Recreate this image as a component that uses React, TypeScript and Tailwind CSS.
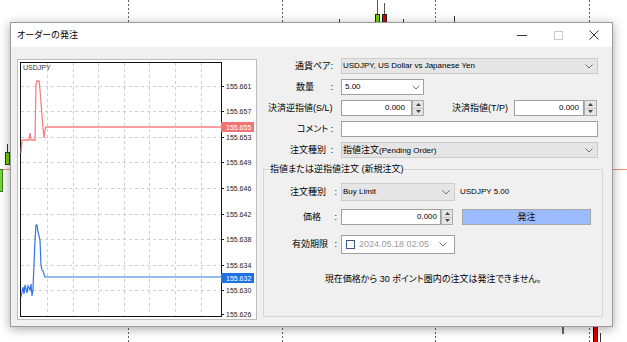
import React from "react";

const gridX = [29, 55, 80, 106, 131, 157, 183];
const levels = [
  { y: 26, p: "155.661" },
  { y: 51, p: "155.657" },
  { y: 77, p: "155.653" },
  { y: 102, p: "155.649" },
  { y: 128, p: "155.646" },
  { y: 154, p: "155.642" },
  { y: 179, p: "155.638" },
  { y: 205, p: "155.634" },
  { y: 230, p: "155.630" },
  { y: 254, p: "155.626" },
];

const bid =
  "3,93 4,80 11,80 12,73 13,80 17,80 18,25 19,21 21,21 22,30 25,68 26,78 27,70 28,67 203,67";
const ask =
  "3,237 5,227 6,234 7,225 9,233 10,226 12,230 13,224 14,236 15,229 17,180 18,165 19,165 20,172 22,180 23,205 24,210 25,211 27,217 203,217";

function Chevron({ className = "" }: { className?: string }) {
  return (
    <svg width="8" height="5" viewBox="0 0 8 5" className={className}>
      <path d="M0.5 0.5L4 4L7.5 0.5" fill="none" stroke="#707070" strokeWidth="1" />
    </svg>
  );
}

function Spin({ className }: { className: string }) {
  return (
    <div className={`flex h-full flex-col border border-[#adadad] bg-[#e5e5e5] ${className}`}>
      <div className="flex flex-1 items-center justify-center border-b border-[#c8c8c8]">
        <svg width="5" height="3" viewBox="0 0 5 3">
          <path d="M0 3L2.5 0L5 3Z" fill="#444" />
        </svg>
      </div>
      <div className="flex flex-1 items-center justify-center">
        <svg width="5" height="3" viewBox="0 0 5 3">
          <path d="M0 0L2.5 3L5 0Z" fill="#444" />
        </svg>
      </div>
    </div>
  );
}

function Label({
  text,
  pad,
  end,
  width = "w-[78px]",
}: {
  text: string;
  pad: string;
  end: string;
  width?: string;
}) {
  return (
    <div className={`flex shrink-0 items-center whitespace-nowrap ${width}`}>
      <span className={pad}>{text}</span>
      <span className={`ml-auto ${end}`}>:</span>
    </div>
  );
}

function Chart() {
  return (
    <svg width="238" height="259" viewBox="0 0 238 259" className="block">
      {gridX.map((x) => (
        <line key={x} x1={x + 0.5} y1="3" x2={x + 0.5} y2="256" stroke="#cfcfcf" strokeDasharray="3 3" />
      ))}
      {levels.slice(0, 9).map((l) => (
        <line key={l.p} x1="3" y1={l.y + 0.5} x2="203" y2={l.y + 0.5} stroke="#cfcfcf" strokeDasharray="3 3" />
      ))}
      <rect x="2.5" y="2.5" width="201" height="254" fill="none" stroke="#111" />
      {levels.map((l) => (
        <g key={l.p}>
          <line x1="203.5" y1={l.y + 0.5} x2="206" y2={l.y + 0.5} stroke="#111" />
          <text x="208" y={l.y + 3} fontSize="7" fill="#222" fontFamily="Liberation Sans">
            {l.p}
          </text>
        </g>
      ))}
      <text x="5" y="10" fontSize="7" fill="#333" fontFamily="Liberation Sans">
        USDJPY
      </text>
      <polyline points={bid} fill="none" stroke="#f48080" strokeWidth="1.3" />
      <rect x="203" y="62" width="33" height="10" fill="#f27474" />
      <text x="208" y="70" fontSize="7" fill="#fff" fontFamily="Liberation Sans">
        155.655
      </text>
      <polyline points={ask} fill="none" stroke="#2f74e6" strokeWidth="1.2" />
      <rect x="203" y="213" width="33" height="10" fill="#1f6fe5" />
      <text x="208" y="221" fontSize="7" fill="#fff" fontFamily="Liberation Sans">
        155.632
      </text>
    </svg>
  );
}

function Backdrop() {
  return (
    <svg width="627" height="342" className="absolute inset-0">
      {[128.5, 282.5, 435.5, 589.5].map((x) => (
        <line key={x} x1={x} y1="0" x2={x} y2="342" stroke="#666" strokeDasharray="2 2" />
      ))}
      <line x1="0" y1="169.5" x2="627" y2="169.5" stroke="#f0906c" />
      <line x1="7.5" y1="144" x2="7.5" y2="152" stroke="#333" />
      <rect x="5.5" y="152.5" width="4" height="12" fill="#6fd400" stroke="#333" />
      <rect x="-1" y="169.5" width="3.5" height="22" fill="#7ad63a" stroke="#3a7a20" />
      <line x1="377.5" y1="0" x2="377.5" y2="15" stroke="#555" />
      <rect x="375.5" y="14.5" width="4" height="8" fill="#6fd400" stroke="#222" />
      <line x1="384.5" y1="3" x2="384.5" y2="15" stroke="#555" />
      <rect x="382.5" y="14.5" width="4" height="8" fill="#e00000" stroke="#222" />
      <line x1="339.5" y1="19" x2="339.5" y2="22" stroke="#333" />
      <line x1="403.5" y1="19" x2="403.5" y2="22" stroke="#333" />
      <line x1="454.5" y1="16" x2="454.5" y2="22" stroke="#333" />
      <line x1="563" y1="326" x2="563" y2="334" stroke="#666" strokeWidth="2" />
      <rect x="593.5" y="326" width="4" height="17" fill="#e00000" stroke="#111" />
      <line x1="600.5" y1="333" x2="600.5" y2="342" stroke="#333" />
    </svg>
  );
}

export default function App() {
  return (
    <div className="relative h-[342px] w-[627px] overflow-hidden bg-white font-['Liberation_Sans','Noto_Sans_CJK_JP',sans-serif] text-black [font-feature-settings:'palt']">
      <Backdrop />
      <div className="absolute left-[10px] top-[22px] flex h-[305px] w-[603px] flex-col border border-[#9c9c9c] bg-[#f0f0f0] shadow-[0_2px_10px_rgba(0,0,0,0.35)]">
        {/* title bar */}
        <div className="flex h-[24px] shrink-0 items-center bg-white">
          <span className="pl-[6px] text-[9px] leading-none">オーダーの発注</span>
          <div className="ml-auto flex h-full">
            <div className="flex w-[36px] items-center justify-center">
              <div className="h-px w-[10px] bg-[#333]" />
            </div>
            <div className="flex w-[36px] items-center justify-center">
              <div className="h-[9px] w-[9px] border border-[#c9c9c9]" />
            </div>
            <div className="flex w-[36px] items-center justify-center">
              <svg width="10" height="10" viewBox="0 0 10 10">
                <path d="M0.5 0.5L9.5 9.5M9.5 0.5L0.5 9.5" stroke="#333" strokeWidth="1" />
              </svg>
            </div>
          </div>
        </div>

        <div className="flex flex-1 pl-[6px]">
          <div className="mt-[12px] h-[261px] w-[240px] shrink-0 border border-[#bdbdbd] bg-white">
            <Chart />
          </div>

          <div className="ml-[6px] mt-[11px] flex w-[340px] flex-col text-[9px] leading-none">
            <div className="flex flex-col gap-[5px] pr-[5px]">
              <div className="flex h-[16px] items-center">
                <Label text="通貨ペア" pad="pl-[32px]" end="mr-[8px]" />
                <div className="flex h-full flex-1 items-center justify-between border border-[#cccccc] bg-[#e5e5e5] pl-[1px] pr-[4px] text-[8px]">
                  <span>USDJPY, US Dollar vs Japanese Yen</span>
                  <Chevron />
                </div>
              </div>

              <div className="flex h-[16px] items-center">
                <Label text="数量" pad="pl-[33px]" end="mr-[8px]" />
                <div className="flex h-full w-[83px] items-center justify-between border border-[#a0a0a0] bg-white pl-[3px] pr-[3px] text-[8px]">
                  <span>5.00</span>
                  <Chevron />
                </div>
              </div>

              <div className="flex h-[16px] items-center">
                <div className="flex w-[78px] shrink-0 items-center whitespace-nowrap pl-[5px]">決済逆指値(S/L)</div>
                <div className="flex h-full w-[71px] items-center justify-end border border-[#a0a0a0] bg-white pr-[6px] text-[8px]">
                  0.000
                </div>
                <Spin className="w-[12px]" />
                <div className="flex-1 whitespace-nowrap pr-[6px] text-right">決済指値(T/P)</div>
                <div className="flex h-full w-[70px] items-center justify-end border border-[#a0a0a0] bg-white pr-[4px] text-[8px]">
                  0.000
                </div>
                <Spin className="mr-[1px] w-[13px]" />
              </div>

              <div className="flex h-[16px] items-center">
                <Label text="コメント" pad="pl-[34px]" end="mr-[8px]" />
                <div className="h-full flex-1 border border-[#a0a0a0] bg-white" />
              </div>

              <div className="flex h-[16px] items-center">
                <Label text="注文種別" pad="pl-[27px]" end="mr-[8px]" />
                <div className="flex h-full flex-1 items-center justify-between border border-[#cccccc] bg-[#e5e5e5] pl-[1px] pr-[4px] text-[8px]">
                  <span>
                    <span className="text-[9px]">指値注文</span>(Pending Order)
                  </span>
                  <Chevron />
                </div>
              </div>
            </div>

            <fieldset className="mt-[5px] h-[154px] w-[340px] border border-[#d6d6d6] p-0">
              <legend className="ml-[5px] px-[1px] text-[9px] leading-[13px]">指値または逆指値注文 (新規注文)</legend>
              <div className="flex flex-col pt-[7px]">
                <div className="flex h-[18px] items-center">
                  <Label text="注文種別" pad="pl-[26px]" end="mr-[4px]" width="w-[77px]" />
                  <div className="flex h-full w-[114px] items-center justify-between border border-[#cccccc] bg-[#e5e5e5] pl-[1px] pr-[4px] text-[8px]">
                    <span>Buy Limit</span>
                    <Chevron />
                  </div>
                  <span className="ml-[5px] text-[8px]">USDJPY 5.00</span>
                </div>

                <div className="mt-[8px] flex h-[16px] items-center">
                  <Label text="価格" pad="pl-[39px]" end="mr-[4px]" width="w-[77px]" />
                  <div className="flex h-full w-[100px] items-center justify-end border border-[#a0a0a0] bg-white pr-[3px] text-[8px]">
                    0.000
                  </div>
                  <Spin className="w-[12px]" />
                  <div className="ml-[9px] flex h-full w-[129px] items-center justify-center border border-[#a8a8a8] bg-[#9dbcff] text-[#111]">
                    発注
                  </div>
                </div>

                <div className="mt-[10px] flex h-[19px] items-center">
                  <Label text="有効期限" pad="pl-[28px]" end="mr-[4px]" width="w-[77px]" />
                  <div className="flex h-full w-[114px] items-center border border-[#a0a0a0] bg-white">
                    <div className="ml-[4px] h-[9px] w-[9px] shrink-0 border border-[#3a5585]" />
                    <span className="ml-[4px] w-[70px] overflow-hidden whitespace-nowrap text-[#9a9a9a]">
                      2024.05.18 02:05
                    </span>
                    <Chevron className="ml-auto mr-[7px]" />
                  </div>
                </div>

                <div className="mt-[21px] text-center">現在価格から 30 ポイント圏内の注文は発注できません。</div>
              </div>
            </fieldset>
          </div>
        </div>
      </div>
    </div>
  );
}
